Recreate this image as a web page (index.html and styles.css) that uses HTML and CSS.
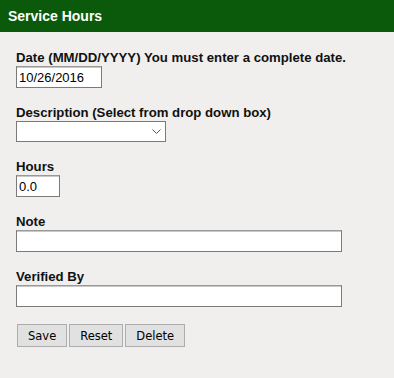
FILE: index.html
```html
<!DOCTYPE html>
<html lang="en">
<head>
    <meta charset="UTF-8">
    <meta name="viewport" content="width=device-width, initial-scale=1.0">
    <title>Service Hours</title>
    <link rel="stylesheet" href="styles.css">
</head>
<body>
    <div class="header">Service Hours</div>

    <div class="form">
        <div class="field">
            <label for="date">Date (MM/DD/YYYY) You must enter a complete date.</label>
            <input type="text" id="date" class="input-date" value="10/26/2016">
        </div>

        <div class="field">
            <label for="description">Description (Select from drop down box)</label>
            <div class="select-wrap">
                <select id="description">
                    <option value=""></option>
                </select>
                <svg class="chevron" width="9" height="5" viewBox="0 0 9 5">
                    <polyline points="0.5,0.5 4.5,4.5 8.5,0.5" fill="none" stroke="#555" stroke-width="1"/>
                </svg>
            </div>
        </div>

        <div class="field">
            <label for="hours">Hours</label>
            <input type="text" id="hours" class="input-hours" value="0.0">
        </div>

        <div class="field">
            <label for="note">Note</label>
            <input type="text" id="note" class="input-wide">
        </div>

        <div class="field">
            <label for="verified">Verified By</label>
            <input type="text" id="verified" class="input-wide">
        </div>

        <div class="buttons">
            <button>Save</button>
            <button>Reset</button>
            <button>Delete</button>
        </div>
    </div>
</body>
</html>
```

FILE: styles.css
```css
body {
    margin: 0;
    background-color: #f0efed;
    font-family: "Liberation Sans", Arial, sans-serif;
    color: #111;
}
.header {
    height: 32px;
    box-sizing: border-box;
    padding: 8px 8px 0;
    background-color: #0b5a0b;
    color: #fff;
    font-size: 14px;
    font-weight: bold;
    line-height: 16px;
}
.form {
    padding: 18px 16px 0;
}
.field {
    margin-bottom: 17px;
}
label {
    display: block;
    font-size: 13.2px;
    font-weight: bold;
    line-height: 16px;
}
input {
    display: block;
    box-sizing: border-box;
    height: 22px;
    margin: 0;
    padding: 0 2px;
    border: 1px solid #7a7a7a;
    border-top-color: #999;
    box-shadow: inset 0 1px 0 #c8c8c8;
    background: #fff;
    font-family: "Liberation Sans", Arial, sans-serif;
    font-size: 13px;
    color: #000;
}
.input-date {
    width: 86px;
}
.input-hours {
    width: 44px;
}
.input-wide {
    width: 326px;
}
.select-wrap {
    position: relative;
    width: 150px;
}
select {
    display: block;
    width: 150px;
    height: 21px;
    margin: 0;
    border: 1px solid #7a7a7a;
    border-radius: 0;
    background: #fff;
    appearance: none;
    -webkit-appearance: none;
}
.chevron {
    position: absolute;
    right: 5px;
    top: 8px;
}
.buttons {
    display: flex;
    gap: 2px;
    margin-top: 1px;
    padding-left: 1px;
}
button {
    height: 23px;
    padding: 0 10px;
    border: 1px solid #adadad;
    background-color: #e1e1e1;
    color: #000;
    font-family: "DejaVu Sans", sans-serif;
    font-size: 11.5px;
}
```
